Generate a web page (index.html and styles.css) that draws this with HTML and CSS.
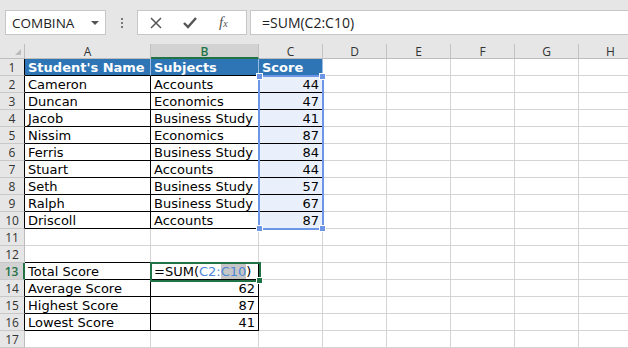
FILE: index.html
```html
<!DOCTYPE html>
<html lang="en">
<head>
    <meta charset="UTF-8">
    <title>Sheet - Total Score</title>
    <link rel="stylesheet" href="styles.css">
</head>
<body>
    <div class="topbar">
        <div class="namebox">
            <span>COMBINA</span>
            <span class="caret"></span>
        </div>
        <div class="dots"><i></i><i></i><i></i></div>
        <div class="fxbox">
            <svg class="ic-x" width="14" height="14" viewBox="0 0 14 14"><path d="M2 2 L12 12 M12 2 L2 12" stroke="#555" stroke-width="1.5" fill="none"/></svg>
            <svg class="ic-ok" width="16" height="14" viewBox="0 0 16 14"><path d="M2 7 L6 11 L14 2" stroke="#555" stroke-width="2.4" fill="none"/></svg>
            <span class="fx">f<small>x</small></span>
        </div>
        <div class="formula">=SUM(C2:C10)</div>
    </div>

    <div class="sheet" id="sheet">
        <div class="range"><b class="h1"></b><b class="h2"></b><b class="h3"></b><b class="h4"></b></div>
        <div class="active"><b></b></div>
    </div>

    <script>
        const sheet = document.getElementById('sheet');
        const cols = ['A', 'B', 'C', 'D', 'E', 'F', 'G', 'H'];

        const rows = [
            ["Student's Name", 'Subjects', 'Score'],
            ['Cameron', 'Accounts', 44],
            ['Duncan', 'Economics', 47],
            ['Jacob', 'Business Study', 41],
            ['Nissim', 'Economics', 87],
            ['Ferris', 'Business Study', 84],
            ['Stuart', 'Accounts', 44],
            ['Seth', 'Business Study', 57],
            ['Ralph', 'Business Study', 67],
            ['Driscoll', 'Accounts', 87],
            [], [],
            ['Total Score', 'FORMULA'],
            ['Average Score', 62],
            ['Highest Score', 87],
            ['Lowest Score', 41],
            []
        ];

        function add(cls, html) {
            const d = document.createElement('div');
            d.className = cls;
            d.innerHTML = html || '';
            sheet.appendChild(d);
        }

        // column headers
        add('cell corner', '<span class="tri"></span>');
        cols.forEach(c => add('cell hdr' + (c === 'B' ? ' on' : ''), c));

        rows.forEach((row, i) => {
            const n = i + 1;
            const table = n <= 10;
            const summary = n >= 13 && n <= 16;
            add('cell rh' + (n === 13 ? ' on' : '') + (table || summary ? ' bl' : ''), n);

            cols.forEach((c, j) => {
                let cls = 'cell';
                let v = row[j] !== undefined ? row[j] : '';
                if (table && j < 3) cls += ' bd';
                if (summary && j < 2) cls += ' bd';
                if (n === 12 && j < 2) cls += ' bb';
                if (n === 1 && j < 3) cls += ' th';
                if (typeof v === 'number') cls += ' num';
                if (n >= 2 && n <= 10 && j === 2) cls += ' sel';
                if (v === 'FORMULA') v = '=SUM(<span class="ref">C2:<span class="hl">C10</span></span>)';
                add(cls, v);
            });
        });
    </script>
</body>
</html>
```

FILE: styles.css
```css
body {
    margin: 0;
    width: 628px;
    height: 348px;
    overflow: hidden;
    background-color: #e6e6e6;
    font-family: 'DejaVu Sans', Verdana, sans-serif;
    color: #000;
}
.topbar {
    height: 44px;
    box-sizing: border-box;
    padding-top: 10px;
    display: flex;
    align-items: flex-start;
    font-family: 'Open Sans', 'Noto Sans', sans-serif;
}
.namebox {
    flex: none;
    margin-left: 5px;
    width: 101px;
    height: 25px;
    box-sizing: border-box;
    background: #fff;
    border: 1px solid #c6c6c6;
    display: flex;
    align-items: center;
    justify-content: space-between;
    padding: 0 6px 0 6px;
    font-size: 13.5px;
    color: #222;
}
.caret {
    width: 0;
    height: 0;
    border-left: 4px solid transparent;
    border-right: 4px solid transparent;
    border-top: 4px solid #555;
}
.dots {
    flex: none;
    width: 31px;
    height: 25px;
    display: flex;
    flex-direction: column;
    align-items: center;
    justify-content: center;
    gap: 2px;
}
.dots i {
    width: 2px;
    height: 2px;
    background: #777;
}
.fxbox {
    flex: none;
    width: 110px;
    height: 25px;
    box-sizing: border-box;
    background: #fff;
    border: 1px solid #c6c6c6;
    display: flex;
    align-items: center;
    padding-left: 11px;
}
.ic-ok {
    margin-left: 19px;
}
.fx {
    margin-left: 21px;
    font-family: 'Liberation Serif', serif;
    font-style: italic;
    font-size: 15px;
    color: #555;
}
.fx small {
    font-size: 10px;
}
.formula {
    margin-left: 3px;
    flex: 1;
    height: 25px;
    box-sizing: border-box;
    background: #fff;
    border: 1px solid #c6c6c6;
    border-right: none;
    padding-left: 11px;
    line-height: 23px;
    font-size: 14px;
    color: #222;
}
.sheet {
    position: relative;
    display: grid;
    grid-template-columns: 25px 126px 108px repeat(6, 64px);
    grid-template-rows: 15px repeat(17, 17px);
    background: #fff;
}
.cell {
    box-sizing: border-box;
    border-right: 1px solid #d4d4d4;
    border-bottom: 1px solid #d4d4d4;
    font-size: 13px;
    line-height: 15px;
    padding: 1px 3px 0;
    white-space: nowrap;
    overflow: hidden;
}
.corner {
    background: #e6e6e6;
    border-right: 1px solid #bdbdbd;
    border-bottom: 1px solid #bdbdbd;
    position: relative;
}
.tri {
    position: absolute;
    right: 3px;
    bottom: 3px;
    width: 0;
    height: 0;
    border-left: 6px solid transparent;
    border-bottom: 6px solid #bcbcbc;
}
.hdr {
    background: #e6e6e6;
    border-right: 1px solid #c2c2c2;
    border-bottom: 1px solid #bdbdbd;
    text-align: center;
    font-family: 'Open Sans', 'Noto Sans', sans-serif;
    font-size: 12px;
    line-height: 14px;
    color: #333;
}
.hdr.on {
    background: #d2d2d2;
    color: #217346;
    font-weight: 600;
    border-bottom: 2px solid #217346;
}
.rh {
    background: #e6e6e6;
    border-right: 1px solid #bdbdbd;
    border-bottom: 1px solid #c8c8c8;
    text-align: center;
    padding: 1px 0 0;
    font-family: 'Open Sans', 'Noto Sans', sans-serif;
    font-size: 12px;
    color: #333;
}
.rh.bl {
    border-right-color: #000;
}
.rh.on {
    background: #d2d2d2;
    color: #217346;
    font-weight: 600;
    border-right: 2px solid #217346;
}
.bd {
    border-right-color: #000;
    border-bottom-color: #000;
}
.bb {
    border-bottom-color: #000;
}
.th {
    background: #2e75b6;
    color: #fff;
    font-weight: bold;
    border-right-color: #9dbbe0;
}
.num {
    text-align: right;
}
.sel {
    background: #eaf0fb;
}
.ref {
    color: #4d86d6;
}
.hl {
    background: #c6c6c6;
}
.range {
    position: absolute;
    left: 258px;
    top: 31px;
    width: 66px;
    height: 155px;
    box-sizing: border-box;
    border: 2px solid #6d97e6;
}
.range b {
    position: absolute;
    width: 5px;
    height: 5px;
    background: #6d97e6;
    border: 1px solid #fff;
}
.range .h1 { left: -4px; top: -4px; }
.range .h2 { right: -4px; top: -4px; }
.range .h3 { left: -4px; bottom: -4px; }
.range .h4 { right: -4px; bottom: -4px; }
.active {
    position: absolute;
    left: 150px;
    top: 218px;
    width: 111px;
    height: 20px;
    box-sizing: border-box;
    border: 2px solid #217346;
}
.active b {
    position: absolute;
    right: -4px;
    bottom: -4px;
    width: 5px;
    height: 5px;
    background: #217346;
    border: 1px solid #fff;
}
```
